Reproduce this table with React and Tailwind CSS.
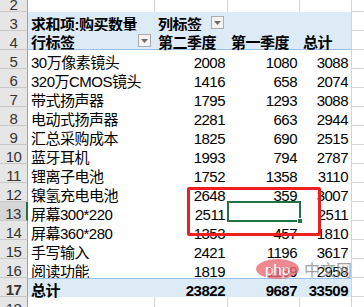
import React from 'react';

const rows = [
  [5, '30万像素镜头', 2008, 1080, 3088],
  [6, '320万CMOS镜头', 1416, 658, 2074],
  [7, '带式扬声器', 1795, 1293, 3088],
  [8, '电动式扬声器', 2281, 663, 2944],
  [9, '汇总采购成本', 1825, 690, 2515],
  [10, '蓝牙耳机', 1993, 794, 2787],
  [11, '锂离子电池', 1752, 1358, 3110],
  [12, '镍氢充电电池', 2648, 359, 3007],
  [13, '屏幕300*220', 2511, '', 2511],
  [14, '屏幕360*280', 1353, 457, 1810],
  [15, '手写输入', 2421, 1196, 3617],
  [16, '阅读功能', 1819, 1139, 2958],
];

const cell = 'flex items-end leading-[13px] whitespace-nowrap shrink-0';

const RowHead = ({ n, active }) => (
  <div
    className={`${cell} w-[28px] justify-center border-b border-b-[#C8C8C8] text-[#333] ${
      active ? 'bg-[#D6D6D6] border-r-2 border-r-[#217346]' : 'bg-[#E6E6E6] border-r border-r-[#A0A0A0]'
    }`}
  >
    {n}
  </div>
);

const Dropdown = () => (
  <div className="w-[13px] h-[13px] mb-[2px] bg-[#F4F4F4] border border-[#ABABAB] flex items-center justify-center">
    <svg width="7" height="4" viewBox="0 0 7 4">
      <path d="M0 0 L7 0 L3.5 4 Z" fill="#6B6B6B" />
    </svg>
  </div>
);

const App = () => {
  return (
    <div className="relative w-[364px] h-[307px] overflow-hidden bg-white text-[15px] tracking-[-0.5px] text-black font-['Liberation_Sans','Noto_Sans_CJK_SC',sans-serif]">
      {/* row 2, partly cut off */}
      <div className="flex h-[19px] -mt-[7px]">
        <RowHead n={2} />
        <div className={`${cell} w-[127px] border-r border-[#D4D4D4]`} />
        <div className={`${cell} w-[73px] border-r border-[#D4D4D4]`} />
        <div className={`${cell} w-[72px] border-r border-[#D4D4D4]`} />
        <div className={`${cell} w-[52px] border-r border-[#D4D4D4]`} />
        <div className={`${cell} w-[12px] border-b border-[#D4D4D4]`} />
      </div>

      {/* row 3 */}
      <div className="flex h-[19px]">
        <RowHead n={3} />
        <div className={`${cell} w-[127px] pl-[3px] bg-[#DDEBF7] font-bold`}>求和项:购买数量</div>
        <div className={`${cell} w-[73px] pl-[3px] pr-[4px] justify-between bg-[#DDEBF7] font-bold`}>
          <span>列标签</span>
          <Dropdown />
        </div>
        <div className={`${cell} w-[72px] bg-[#DDEBF7]`} />
        <div className={`${cell} w-[52px] bg-[#DDEBF7] border-r border-[#D4D4D4]`} />
        <div className={`${cell} w-[12px] border-b border-[#D4D4D4]`} />
      </div>

      {/* row 4 */}
      <div className="flex h-[19px]">
        <RowHead n={4} />
        <div className={`${cell} w-[127px] pl-[3px] pr-[4px] justify-between bg-[#DDEBF7] border-b border-b-[#9BC2E6] font-bold`}>
          <span>行标签</span>
          <Dropdown />
        </div>
        <div className={`${cell} w-[73px] pl-[3px] bg-[#DDEBF7] border-b border-b-[#9BC2E6] font-bold`}>第二季度</div>
        <div className={`${cell} w-[72px] pl-[3px] bg-[#DDEBF7] border-b border-b-[#9BC2E6] font-bold`}>第一季度</div>
        <div className={`${cell} w-[52px] pl-[3px] bg-[#DDEBF7] border-b border-b-[#9BC2E6] border-r border-r-[#D4D4D4] font-bold`}>总计</div>
        <div className={`${cell} w-[12px] border-b border-[#D4D4D4]`} />
      </div>

      {rows.map(([n, label, c, d, e]) => (
        <div key={n} className="flex h-[19px]">
          <RowHead n={n} active={n === 13} />
          <div className={`${cell} w-[127px] pl-[3px]`}>{label}</div>
          <div className={`${cell} w-[73px] justify-end pr-[3px]`}>{c}</div>
          <div className={`${cell} w-[72px] justify-end pr-[3px]`}>{d}</div>
          <div className={`${cell} w-[52px] justify-end pr-[3px] border-r border-[#D4D4D4]`}>{e}</div>
          <div className={`${cell} w-[12px] border-b border-[#D4D4D4]`} />
        </div>
      ))}

      {/* row 17, totals */}
      <div className="flex h-[19px] font-bold">
        <RowHead n={17} />
        <div className={`${cell} w-[127px] pl-[3px] bg-[#DDEBF7] border-t border-t-[#9BC2E6]`}>总计</div>
        <div className={`${cell} w-[73px] justify-end pr-[3px] bg-[#DDEBF7] border-t border-t-[#9BC2E6]`}>23822</div>
        <div className={`${cell} w-[72px] justify-end pr-[3px] bg-[#DDEBF7] border-t border-t-[#9BC2E6]`}>9687</div>
        <div className={`${cell} w-[52px] justify-end pr-[3px] bg-[#DDEBF7] border-t border-t-[#9BC2E6] border-r border-r-[#D4D4D4]`}>33509</div>
        <div className={`${cell} w-[12px] border-b border-[#D4D4D4]`} />
      </div>

      {/* row 18, partly cut off */}
      <div className="flex h-[19px]">
        <RowHead n={18} />
        <div className={`${cell} w-[127px] border-r border-[#D4D4D4]`} />
        <div className={`${cell} w-[73px] border-r border-[#D4D4D4]`} />
        <div className={`${cell} w-[72px] border-r border-[#D4D4D4]`} />
        <div className={`${cell} w-[52px] border-r border-[#D4D4D4]`} />
        <div className={`${cell} w-[12px] border-b border-[#D4D4D4]`} />
      </div>

      {/* active cell D13 */}
      <div className="absolute left-[227px] top-[201px] w-[74px] h-[21px] border-2 border-[#217346]" />
      <div className="absolute left-[297px] top-[218px] w-[6px] h-[6px] bg-[#217346] border border-white" />

      {/* red highlight box */}
      <div className="absolute left-[187px] top-[187px] w-[134px] h-[49px] border-[3px] border-[#F01E1E] rounded-[2px]" />

      {/* watermark */}
      <div className="absolute left-[256px] top-[259px] flex items-center gap-[5px] opacity-80">
        <div className="w-[43px] h-[20px] rounded-[50%] bg-[#EC6C76] flex items-center justify-center text-white text-[15px] leading-none tracking-normal font-['Liberation_Sans',sans-serif]">
          php
        </div>
        <span className="text-[16px] leading-none tracking-normal text-[#8C8C8C] font-['Noto_Sans_CJK_SC',sans-serif]">中文网</span>
      </div>
    </div>
  );
};

export default App;
